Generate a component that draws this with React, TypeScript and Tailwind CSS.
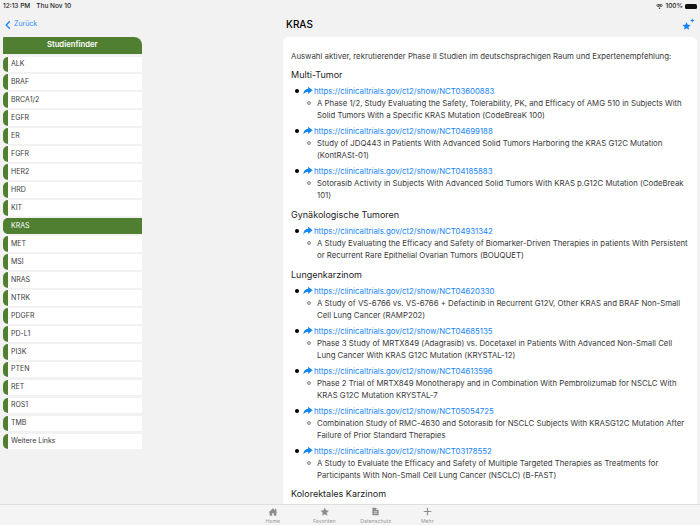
import React from 'react';

const GENES = ['ALK', 'BRAF', 'BRCA1/2', 'EGFR', 'ER', 'FGFR', 'HER2', 'HRD', 'KIT', 'KRAS', 'MET', 'MSI', 'NRAS', 'NTRK', 'PDGFR', 'PD-L1', 'PI3K', 'PTEN', 'RET', 'ROS1', 'TMB', 'Weitere Links'];

const SECTIONS = [
  {
    title: 'Multi-Tumor',
    items: [
      { id: 'NCT03600883', text: 'A Phase 1/2, Study Evaluating the Safety, Tolerability, PK, and Efficacy of AMG 510 in Subjects With Solid Tumors With a Specific KRAS Mutation (CodeBreaK 100)' },
      { id: 'NCT04699188', text: 'Study of JDQ443 in Patients With Advanced Solid Tumors Harboring the KRAS G12C Mutation (KontRASt-01)' },
      { id: 'NCT04185883', text: 'Sotorasib Activity in Subjects With Advanced Solid Tumors With KRAS p.G12C Mutation (CodeBreak 101)' },
    ],
  },
  {
    title: 'Gynäkologische Tumoren',
    items: [
      { id: 'NCT04931342', text: 'A Study Evaluating the Efficacy and Safety of Biomarker-Driven Therapies in patients With Persistent or Recurrent Rare Epithelial Ovarian Tumors (BOUQUET)' },
    ],
  },
  {
    title: 'Lungenkarzinom',
    items: [
      { id: 'NCT04620330', text: 'A Study of VS-6766 vs. VS-6766 + Defactinib in Recurrent G12V, Other KRAS and BRAF Non-Small Cell Lung Cancer (RAMP202)' },
      { id: 'NCT04685135', text: 'Phase 3 Study of MRTX849 (Adagrasib) vs. Docetaxel in Patients With Advanced Non-Small Cell Lung Cancer With KRAS G12C Mutation (KRYSTAL-12)' },
      { id: 'NCT04613596', text: 'Phase 2 Trial of MRTX849 Monotherapy and in Combination With Pembrolizumab for NSCLC With KRAS G12C Mutation KRYSTAL-7' },
      { id: 'NCT05054725', text: 'Combination Study of RMC-4630 and Sotorasib for NSCLC Subjects With KRASG12C Mutation After Failure of Prior Standard Therapies' },
      { id: 'NCT03178552', text: 'A Study to Evaluate the Efficacy and Safety of Multiple Targeted Therapies as Treatments for Participants With Non-Small Cell Lung Cancer (NSCLC) (B-FAST)' },
    ],
  },
];

const STAR = 'M12 1.500l3.200 7 7.600.800-5.700 5.100 1.600 7.500L12 18l-6.700 3.900 1.600-7.500L1.200 9.300l7.600-.800z';

const ShareArrow = () => (
  <svg viewBox="0 0 24 24" className="w-[9.500px] h-[9.500px] shrink-0" fill="#1484f5">
    <path d="M13 2l11 9-11 9v-5.500C8 14.500 4 16.500 1 22c0-9 4-14 12-15z" />
  </svg>
);

const StudyItem = ({ id, text }: { id: string; text: string }) => (
  <li className="flex flex-col mb-[4px]">
    <div className="relative flex items-center h-[12px] pl-[9px]">
      <span className="absolute left-[1px] top-[4px] w-[3.500px] h-[3.500px] rounded-full bg-black" />
      <ShareArrow />
      <span className="text-[#1484f5] ml-[1.500px]">https://clinicaltrials.gov/ct2/show/{id}</span>
    </div>
    <div className="relative pl-[23px] text-[#3a3a3a]">
      <span className="absolute left-[13px] top-[4px] w-[3.500px] h-[3.500px] rounded-full border-[0.75px] border-[#8a8a8a] bg-[#dcdcdc]" />
      {text}
    </div>
  </li>
);

const TabItem = ({ label, icon }: { label: string; icon: React.ReactNode }) => (
  <div className="flex flex-col items-center w-[51.500px]">
    <div className="h-[11px] flex items-center justify-center">{icon}</div>
    <span className="text-[5.200px] leading-[8px] text-[#9a9a9a]">{label}</span>
  </div>
);

export default function App() {
  return (
    <div className="w-[700px] h-[525px] overflow-hidden flex flex-col bg-[#f2f2f2] font-['Inter',sans-serif] text-black">
      {/* status bar */}
      <div className="h-[11px] mt-[1px] flex items-center justify-between pl-[3px] pr-[3px] text-[6.500px] font-medium text-[#222]">
        <div className="flex gap-[6px]">
          <span>12:13 PM</span>
          <span>Thu Nov 10</span>
        </div>
        <div className="flex items-center gap-[2px]">
          <svg viewBox="0 0 24 18" className="w-[7px] h-[5px]" fill="#111">
            <path d="M12 18l-3.500-4a5 5 0 017 0zM5.800 11L3.500 8.500a12 12 0 0117 0L18.200 11a9 9 0 00-12.400 0zM1.900 6.500L0 4.500a17 17 0 0124 0l-1.900 2a14 14 0 00-20.200 0z" />
          </svg>
          <span>100%</span>
          <div className="w-[12px] h-[5px] rounded-[1.500px] bg-[#111]" />
        </div>
      </div>

      <div className="flex-1 min-h-0 flex">
        {/* sidebar */}
        <div className="w-[283px] shrink-0 flex flex-col pl-[3px]">
          <div className="h-[25px] flex items-center pl-[2px] text-[#2f8ef4] text-[7px]">
            <svg viewBox="0 0 10 16" className="w-[5.500px] h-[10px] mr-[3.500px]" fill="none" stroke="#1484f5" strokeWidth="2.400" strokeLinecap="round" strokeLinejoin="round">
              <path d="M8 2L2 8l6 6" />
            </svg>
            Zurück
          </div>
          <div className="w-[138.500px] h-[16.500px] rounded-tr-[8px] rounded-tl-[1px] bg-[#507f31] text-white text-[7.700px] font-semibold flex items-center justify-center">
            Studienfinder
          </div>
          <div className="w-[138.500px] flex flex-col gap-[2.470px] mt-[3px]">
            {GENES.map((g) => (
              <div
                key={g}
                className={`h-[15.500px] rounded-l-[5px] border-l-[5px] border-[#507f31] flex items-center pl-[3px] text-[7px] ${
                  g === 'KRAS' ? 'bg-[#507f31] text-white' : 'bg-white text-[#3a3a3a]'
                }`}
              >
                {g}
              </div>
            ))}
          </div>
        </div>

        {/* detail */}
        <div className="flex-1 min-w-0 flex flex-col">
          <div className="h-[25px] flex items-center justify-between pl-[3px] pr-[6px]">
            <span className="text-[10px] font-medium">KRAS</span>
            <svg viewBox="0 0 12 13" className="w-[12px] h-[13px]">
              <path d={STAR} transform="translate(0 3.500) scale(0.38)" fill="#1484f5" />
              <path d="M8.500 2.500h3.500M10.250.750v3.500" stroke="#1484f5" strokeWidth="1" fill="none" />
            </svg>
          </div>
          <div className="flex-1 min-h-0 overflow-hidden mr-[3px] bg-white rounded-t-[5px] pl-[8px] pr-[8px] pt-[13px] text-[7.800px] leading-[12px] text-[#3a3a3a]">
            <p>Auswahl aktiver, rekrutierender Phase II Studien im deutschsprachigen Raum und Expertenempfehlung:</p>
            {SECTIONS.map((s, n) => (
              <div key={s.title}>
                <h2 className={`text-[9px] leading-[12px] text-[#222] mb-[4px] ${n === 0 ? 'mt-[7px]' : 'mt-[8px]'}`}>{s.title}</h2>
                <ul className="pl-[3px]">
                  {s.items.map((i) => (
                    <StudyItem key={i.id} id={i.id} text={i.text} />
                  ))}
                </ul>
              </div>
            ))}
            <h2 className="text-[9px] leading-[12px] text-[#222] mt-[7px]">Kolorektales Karzinom</h2>
          </div>
        </div>
      </div>

      {/* tab bar */}
      <div className="h-[21px] shrink-0 border-t border-[#dedede] bg-[#f4f4f4] flex justify-center items-start pt-[1px]">
        <TabItem
          label="Home"
          icon={
            <svg viewBox="0 0 24 24" className="w-[10px] h-[10px]" fill="#8e8e8e">
              <path d="M12 3L1 13h3v8h6v-6h4v6h6v-8h3l-3-2.700V4h-3v3.600z" />
            </svg>
          }
        />
        <TabItem
          label="Favoriten"
          icon={
            <svg viewBox="0 0 24 24" className="w-[9.500px] h-[9.500px]" fill="#8e8e8e">
              <path d={STAR} />
            </svg>
          }
        />
        <TabItem
          label="Datenschutz"
          icon={
            <svg viewBox="0 0 20 24" className="w-[7px] h-[9px]" fill="#8e8e8e">
              <path d="M1 1h11l7 7v15H1zM12 2.500V8h5.500zM5 12v2h10v-2zm0 4v2h10v-2z" fillRule="evenodd" />
            </svg>
          }
        />
        <TabItem
          label="Mehr"
          icon={
            <svg viewBox="0 0 24 24" className="w-[9px] h-[9px]" fill="#8e8e8e">
              <path d="M10.500 2h3v8.500H22v3h-8.500V22h-3v-8.500H2v-3h8.500z" />
            </svg>
          }
        />
      </div>
    </div>
  );
}
